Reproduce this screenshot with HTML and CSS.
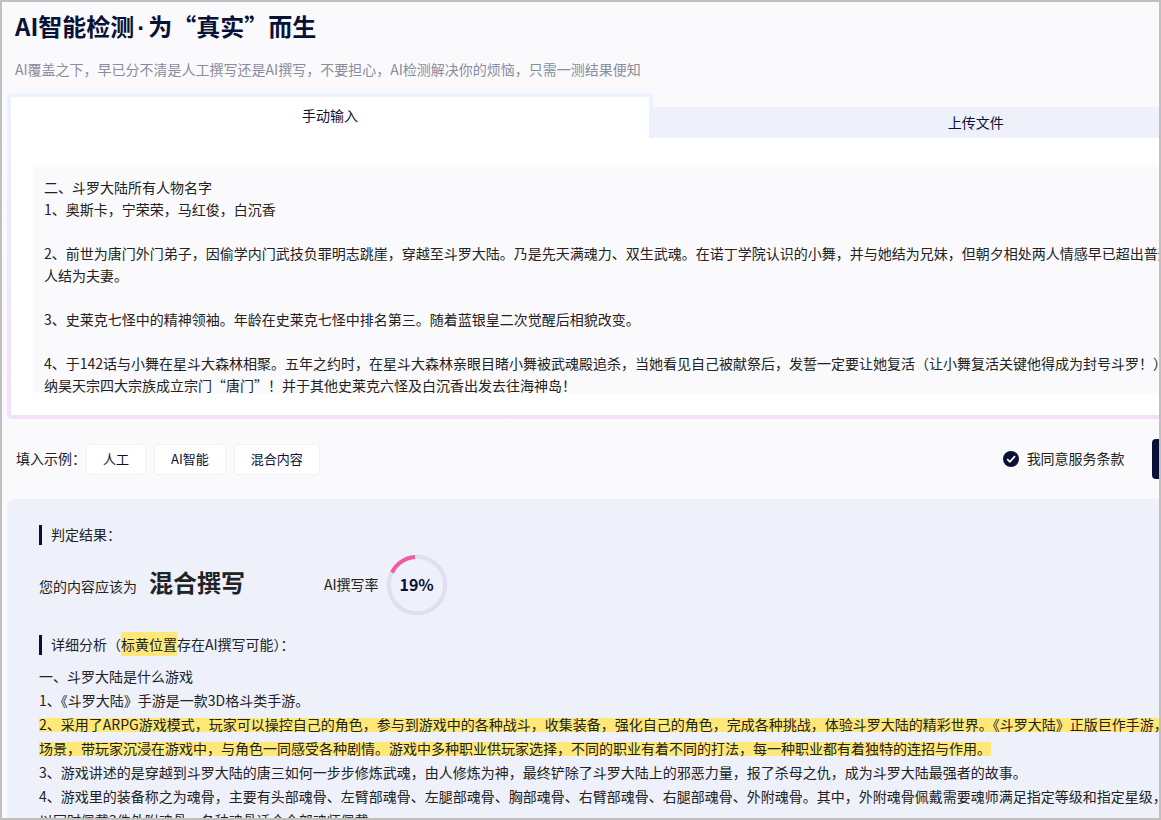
FILE: index.html
```html
<!DOCTYPE html>
<html lang="zh-CN">
<head>
<meta charset="utf-8">
<title>AI智能检测</title>
<link rel="stylesheet" href="styles.css">
</head>
<body>
<div class="frame">
  <main class="page">
    <header class="intro">
      <h1 class="intro-title">AI智能检测<span class="dot">·</span>为“真实”而生</h1>
      <p class="intro-text">AI覆盖之下，早已分不清是人工撰写还是AI撰写，不要担心，AI检测解决你的烦恼，只需一测结果便知</p>
    </header>

    <section class="panel">
      <div class="tabs" role="tablist">
        <button class="tab tab-active" type="button" role="tab" aria-selected="true">手动输入</button>
        <button class="tab tab-idle" type="button" role="tab" aria-selected="false">上传文件</button>
      </div>
      <div class="panel-body">
        <textarea class="editor" wrap="off" spellcheck="false" aria-label="手动输入">二、斗罗大陆所有人物名字
1、奥斯卡，宁荣荣，马红俊，白沉香

2、前世为唐门外门弟子，因偷学内门武技负罪明志跳崖，穿越至斗罗大陆。乃是先天满魂力、双生武魂。在诺丁学院认识的小舞，并与她结为兄妹，但朝夕相处两人情感早已超出普通
人结为夫妻。

3、史莱克七怪中的精神领袖。年龄在史莱克七怪中排名第三。随着蓝银皇二次觉醒后相貌改变。

4、于142话与小舞在星斗大森林相聚。五年之约时，在星斗大森林亲眼目睹小舞被武魂殿追杀，当她看见自己被献祭后，发誓一定要让她复活（让小舞复活关键他得成为封号斗罗！）
纳昊天宗四大宗族成立宗门“唐门”！并于其他史莱克六怪及白沉香出发去往海神岛！</textarea>
      </div>
    </section>

    <div class="actions">
      <div class="examples">
        <span class="actions-text">填入示例：</span>
        <div class="examples-list">
          <button class="example" type="button">人工</button>
          <button class="example" type="button">AI智能</button>
          <button class="example" type="button">混合内容</button>
        </div>
      </div>
      <label class="agree">
        <span class="agree-box">
          <input class="agree-input" type="checkbox" checked>
          <svg class="agree-tick" viewBox="0 0 16 16" aria-hidden="true"><path d="M4.2 8.2 6.9 10.8 12 5.1" fill="none" stroke="#fff" stroke-width="1.8"/></svg>
        </span>
        <span class="actions-text">我同意服务条款</span>
      </label>
      <button class="submit" type="button" aria-label="检测"></button>
    </div>

    <section class="result">
      <h2 class="result-title">判定结果：</h2>
      <div class="verdict">
        <p class="verdict-text">您的内容应该为<strong class="verdict-value">混合撰写</strong></p>
        <div class="rate">
          <span class="rate-label">AI撰写率</span>
          <div class="ring">
            <svg class="ring-chart" viewBox="0 0 60 60" aria-hidden="true">
              <circle cx="30" cy="30" r="28" fill="none" stroke="#dfe1f1" stroke-width="4"/>
              <circle cx="30" cy="30" r="29.6" fill="none" stroke="#ead3ea" stroke-width="0.8"/>
              <path d="M28 2A28 28 0 0 0 5 17.5" fill="none" stroke="#f25aa7" stroke-width="4"/>
            </svg>
            <span class="ring-value">19%</span>
          </div>
        </div>
      </div>
      <h2 class="result-title">详细分析（<mark class="legend">标黄位置</mark>存在AI撰写可能）：</h2>
      <p class="analysis">一、斗罗大陆是什么游戏<br>
        1、《斗罗大陆》手游是一款3D格斗类手游。<br>
        <mark class="flagged">2、采用了ARPG游戏模式，玩家可以操控自己的角色，参与到游戏中的各种战斗，收集装备，强化自己的角色，完成各种挑战，体验斗罗大陆的精彩世界。《斗罗大陆》正版巨作手游，<br>场景，带玩家沉浸在游戏中，与角色一同感受各种剧情。游戏中多种职业供玩家选择，不同的职业有着不同的打法，每一种职业都有着独特的连招与作用。</mark><br>
        3、游戏讲述的是穿越到斗罗大陆的唐三如何一步步修炼武魂，由人修炼为神，最终铲除了斗罗大陆上的邪恶力量，报了杀母之仇，成为斗罗大陆最强者的故事。<br>
        4、游戏里的装备称之为魂骨，主要有头部魂骨、左臂部魂骨、左腿部魂骨、胸部魂骨、右臂部魂骨、右腿部魂骨、外附魂骨。其中，外附魂骨佩戴需要魂师满足指定等级和指定星级，<br>
        以同时佩戴2件外附魂骨，各种魂骨适合全部魂师佩戴。</p>
    </section>
  </main>
</div>
</body>
</html>
```
FILE: styles.css
```css
* {
  box-sizing: border-box;
}

body {
  margin: 0;
  color: #222;
  font: 14px/22px "Noto Sans CJK SC", sans-serif;
}

h1, h2, p {
  margin: 0;
}

button, textarea {
  font: inherit;
}

/* Window-sized view; the page inside is wider and runs past its right edge. */
.frame {
  height: 100vh;
  overflow: hidden;
  border: 2px solid #c0c0c0;
  background: #fafafc;
}

.page {
  width: 112.5%;
  padding: 8px 5px 0;
}

.intro {
  padding-left: 8px;
}

.intro-title {
  color: #0a1136;
  font-size: 24px;
  line-height: 32px;
}

.dot {
  padding: 0 3px;
  font-family: "Liberation Sans", sans-serif;
  line-height: 1;
}

.intro-text {
  margin-top: 16px;
  color: #8a8c9e;
}

.panel {
  margin-top: 13px;
  border: 4px solid transparent;
  border-radius: 5px;
  background:
    linear-gradient(#fff, #fff) padding-box,
    linear-gradient(#eaf3fe, #eeebfb 40%, #f6defd) border-box;
}

.tabs {
  display: grid;
  grid-template-columns: 1fr 1fr;
  align-items: end;
  margin: -4px -4px 0;
  background: #fafafc;
}

.tab {
  border: 0;
  padding: 0 0 2px;
  color: #0a1136;
}

.tab-active {
  height: 45px;
  padding-bottom: 6px;
  border: 4px solid transparent;
  border-bottom: 0;
  border-radius: 5px 5px 0 0;
  background:
    linear-gradient(#fff, #fff) padding-box,
    linear-gradient(#eaf3fe, #ebf0fc) border-box;
}

.tab-idle {
  height: 31px;
  background: #eef0fa;
}

.panel-body {
  padding: 27px 22px 22px;
}

.editor {
  display: block;
  width: 100%;
  height: 228px;
  padding: 11px;
  overflow: hidden;
  resize: none;
  border: 0;
  border-radius: 4px;
  background: #fafafc;
  color: #222;
}

.actions {
  display: flex;
  align-items: center;
  margin-top: 20px;
  padding-left: 9px;
}

.actions-text {
  padding-bottom: 2px;
}

.examples,
.examples-list {
  display: flex;
  align-items: center;
}

.examples-list {
  gap: 8px;
}

.example {
  height: 31px;
  padding: 0 16px 1px;
  border: 1px solid #f0f1f5;
  border-radius: 4px;
  background: #fff;
  color: #0a1136;
  font-size: 13px;
  line-height: 20px;
}

.agree {
  display: flex;
  align-items: center;
  gap: 8px;
  margin-left: auto;
  margin-right: 27px;
}

.agree-box {
  display: grid;
}

.agree-input,
.agree-tick {
  grid-area: 1 / 1;
  width: 16px;
  height: 16px;
  margin: 0;
}

.agree-input {
  appearance: none;
  border-radius: 50%;
  background: #0a1136;
}

.agree-tick {
  z-index: 1;
  pointer-events: none;
}

.submit {
  width: 147px;
  height: 40px;
  border: 0;
  border-radius: 4px;
  background: #0a1136;
}

.result {
  margin-top: 20px;
  padding: 26px 32px;
  border-radius: 8px;
  background: #eef0fa;
}

.result-title {
  padding: 0 0 2px 9px;
  border-left: 3px solid #0a1136;
  font-size: 14px;
  font-weight: 400;
  line-height: 18px;
}

.verdict {
  display: flex;
  align-items: center;
  gap: 79px;
  margin: 10px 0 20px;
}

.verdict-text,
.rate-label,
.ring-value {
  padding-bottom: 2px;
}

.verdict-value {
  margin-left: 12px;
  font-size: 24px;
}

.rate {
  display: flex;
  align-items: center;
  gap: 8px;
}

.ring {
  display: grid;
  place-items: center;
}

.ring-chart,
.ring-value {
  grid-area: 1 / 1;
}

.ring-chart {
  width: 60px;
  height: 60px;
}

.ring-value {
  color: #0a1136;
  font-size: 16px;
  font-weight: 700;
}

.legend {
  display: inline-block;
  margin: -3px 0;
  background: #ffe878;
  color: inherit;
  line-height: 24px;
}

.analysis {
  margin-top: 9px;
  line-height: 24px;
  white-space: nowrap;
}

/* A band narrower than the line, drawn behind each line of the text. */
.flagged {
  background: linear-gradient(#ffe878, #ffe878) 0 4px / 100% 14px no-repeat;
  color: inherit;
  -webkit-box-decoration-break: clone;
  box-decoration-break: clone;
}
```
